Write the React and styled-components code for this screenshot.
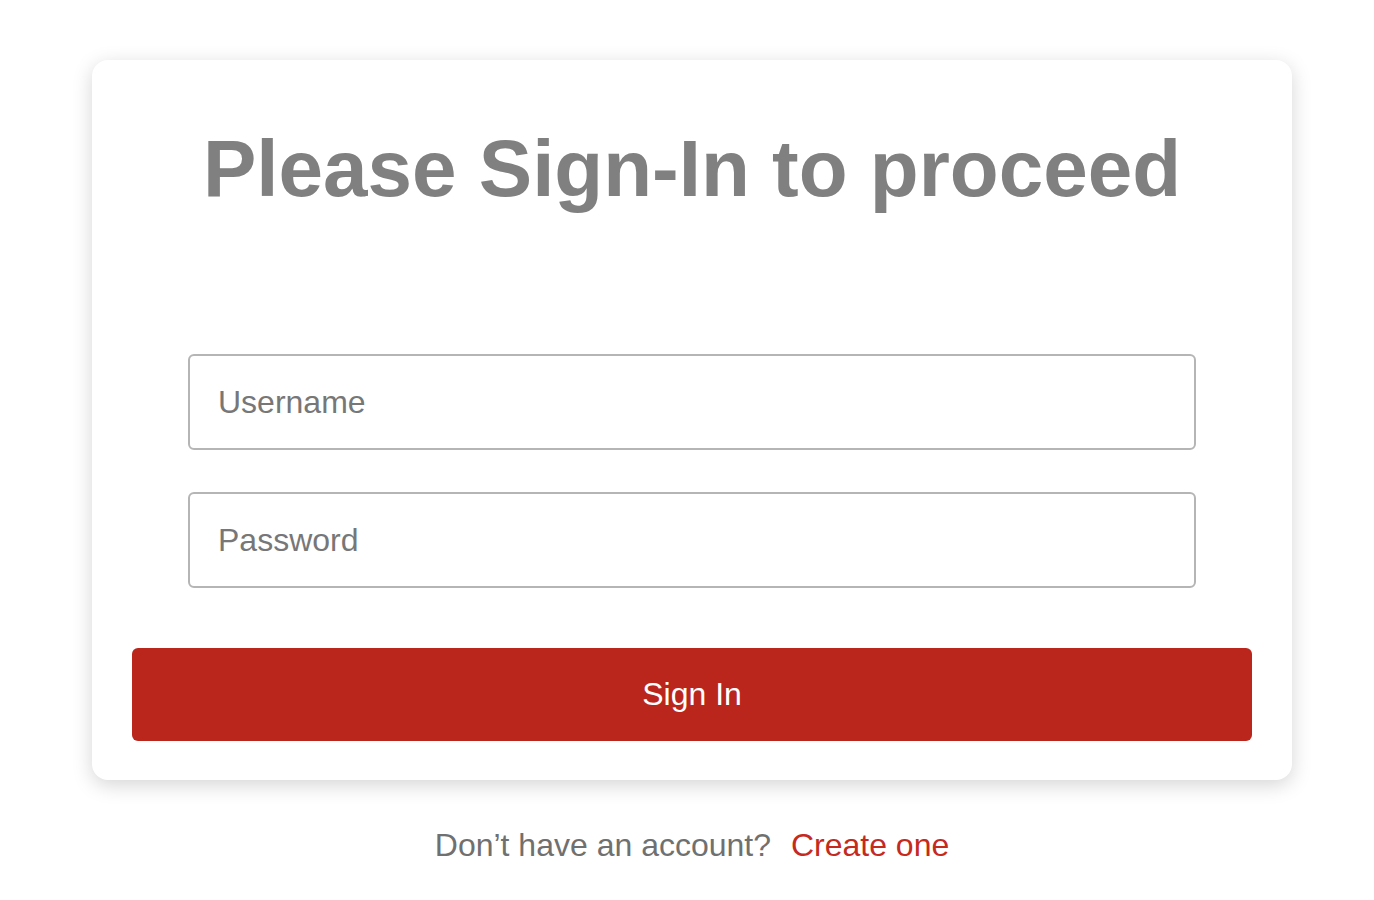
import React from "react";
import styled, { createGlobalStyle } from "styled-components";

const GlobalStyle = createGlobalStyle`
  body {
    margin: 0;
    background: #ffffff;
    font-family: "Liberation Sans", Arial, Helvetica, sans-serif;
  }
`

const Page = styled.div`
  display: flex;
  flex-direction: column;
  align-items: center;
  padding: 60px 0 0 10px;
`

const Card = styled.div`
  width: 1200px;
  box-sizing: border-box;
  padding: 40px 40px 39px;
  background-color: white;
  border-radius: 16px;
  box-shadow: 0 5px 20px 0 rgba(0, 0, 0, 0.17);
`

const Title = styled.h1`
  margin: 23px 0 0;
  font-size: 80px;
  line-height: 92px;
  font-weight: 700;
  color: #808080;
  text-align: center;
`

const Form = styled.form`
  margin-top: 139px;
  display: flex;
  flex-direction: column;
  align-items: center;
`

const Input = styled.input`
  width: 90%;
  height: 96px;
  box-sizing: border-box;
  margin-bottom: ${props => props.last ? "60px" : "42px"};
  padding: 0 28px;
  border: 2px solid #b5b5b5;
  border-radius: 6px;
  font-family: inherit;
  font-size: 32px;
  color: #333;
  outline: none;
  &::placeholder {
    color: #777777;
  }
`

const Button = styled.button`
  width: 100%;
  height: 93px;
  border: none;
  border-radius: 6px;
  background-color: #ba261c;
  color: white;
  font-family: inherit;
  font-size: 32px;
  cursor: pointer;
`

const Footer = styled.p`
  margin: 47px 0 0;
  font-size: 32px;
  line-height: 36px;
  color: #707070;
  text-align: center;
`

const Link = styled.a`
  margin-left: 11px;
  color: #c42b1e;
  text-decoration: none;
  cursor: pointer;
`

export default function App() {
    return (
        <Page>
            <GlobalStyle />
            <Card>
                <Title>Please Sign-In to proceed</Title>
                <Form onSubmit={e => e.preventDefault()}>
                    <Input type="text" placeholder="Username" />
                    <Input type="password" placeholder="Password" last />
                    <Button type="submit">Sign In</Button>
                </Form>
            </Card>
            <Footer>
                Don’t have an account? <Link>Create one</Link>
            </Footer>
        </Page>
    )
}
